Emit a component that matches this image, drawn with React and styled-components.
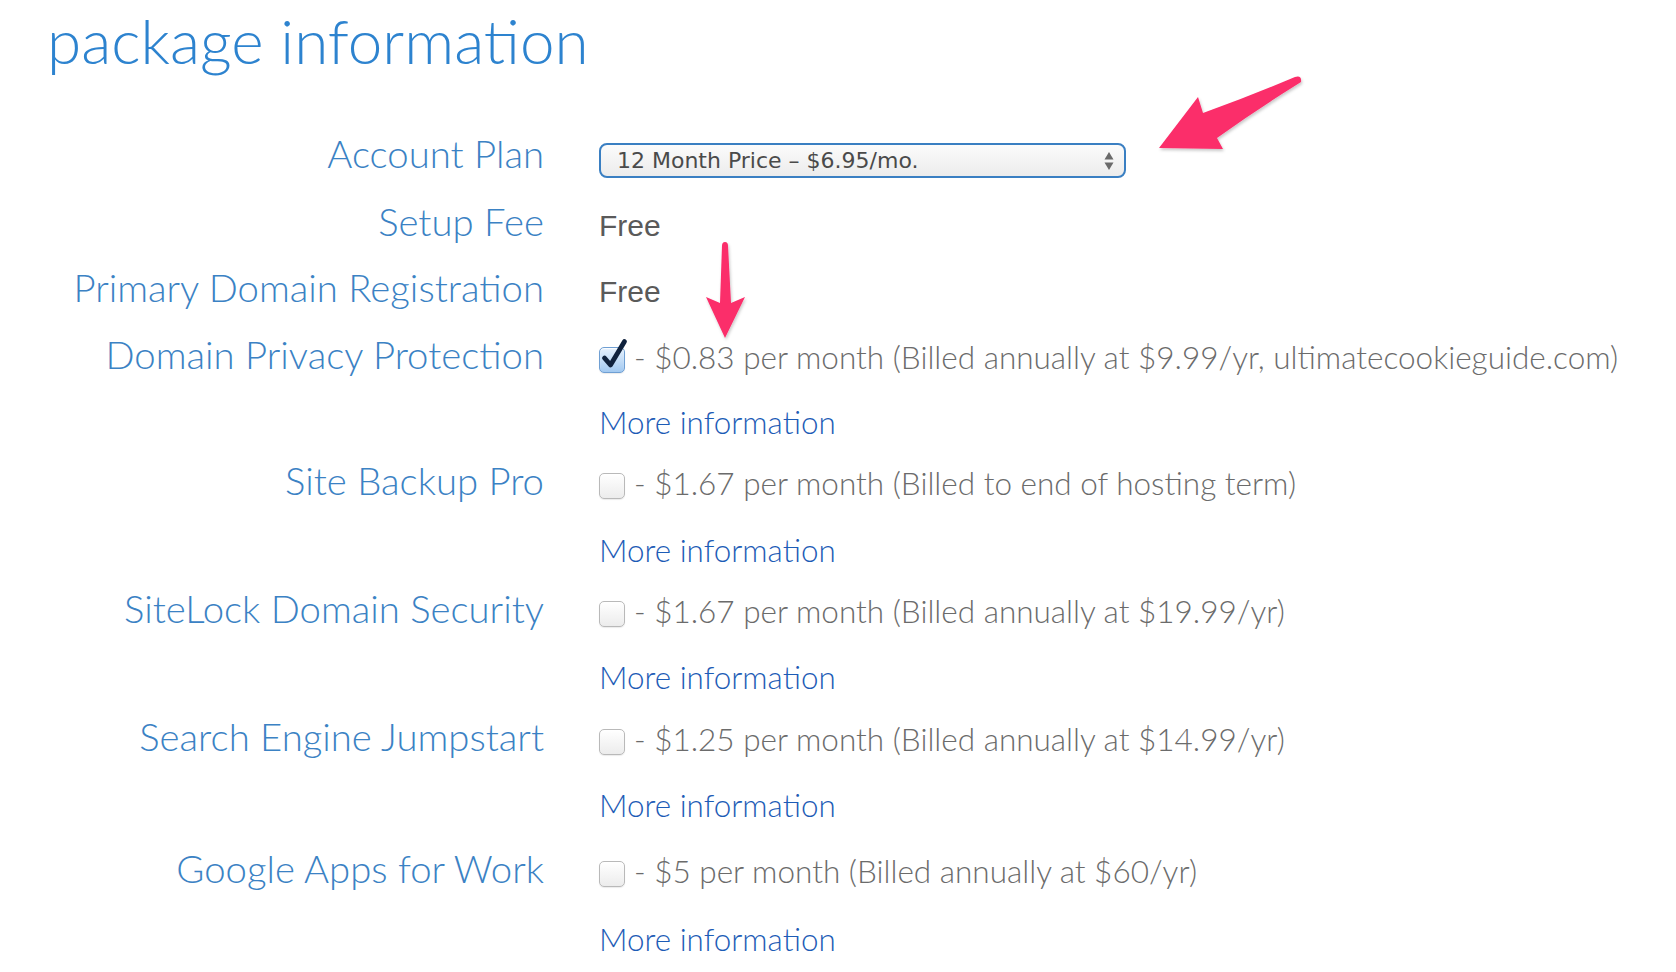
import React from 'react';
import styled, { createGlobalStyle } from 'styled-components';

const GlobalStyle = createGlobalStyle`
  html, body { margin: 0; padding: 0; background: #fff; }
  body { font-family: Lato, "Open Sans", sans-serif; }
`;

const Page = styled.div`
  position: relative;
  width: 1676px;
  height: 972px;
  overflow: hidden;
  background: #fff;
`;

const Title = styled.h1`
  margin: 0 0 53px 47px;
  font-family: Lato, sans-serif;
  font-weight: 300;
  font-size: 62px;
  line-height: 80px;
  color: #2d83cf;
  white-space: nowrap;
`;

const Form = styled.div`
  display: flex;
  flex-direction: column;
`;

const Row = styled.div`
  display: grid;
  grid-template-columns: 544px 1fr;
  column-gap: 55px;
  align-items: baseline;
  height: ${p => p.$h}px;
`;

const Label = styled.div`
  text-align: right;
  font-family: Lato, sans-serif;
  font-weight: 300;
  font-size: 38.3px;
  line-height: 40px;
  color: #3b82c4;
  white-space: nowrap;
`;

const Value = styled.div`
  font-family: Lato, sans-serif;
  font-weight: 300;
  font-size: 31.5px;
  line-height: 45px;
  color: #6b6b6b;
  white-space: nowrap;
`;

const Free = styled.div`
  font-family: "Liberation Sans", Arial, sans-serif;
  font-size: 30px;
  line-height: 45px;
  color: #5a5a5a;
`;

const InfoLink = styled.a`
  grid-column: 2;
  font-family: Lato, sans-serif;
  font-weight: 300;
  font-size: 31.4px;
  line-height: 45px;
  color: #1d5cb6;
  text-decoration: none;
  white-space: nowrap;
`;

const Select = styled.div`
  box-sizing: border-box;
  width: 527px;
  height: 35px;
  border: 2px solid #3a7fc2;
  border-radius: 8px;
  background: linear-gradient(#fbfbfb, #ececec);
  display: flex;
  align-items: center;
  justify-content: space-between;
  padding: 0 10px 0 16px;
  font-family: "DejaVu Sans", sans-serif;
  font-size: 22px;
  color: #4a4a4a;
`;

const Box = styled.span`
  position: relative;
  display: inline-block;
  box-sizing: border-box;
  width: 26px;
  height: 26px;
  margin-right: 9px;
  vertical-align: -4px;
  border-radius: 5px;
  border: 1px solid ${p => (p.$checked ? '#6f9fd3' : '#b9b9b9')};
  background: ${p =>
    p.$checked
      ? 'linear-gradient(#e6f1fd, #a2c9f1)'
      : 'linear-gradient(#ffffff, #ececec)'};
  box-shadow: inset 0 1px 1px rgba(255,255,255,0.9), 0 1px 1px rgba(0,0,0,0.08);
`;

const Tick = styled.svg`
  position: absolute;
  left: 2px;
  top: -9px;
  overflow: visible;
`;

const Overlay = styled.svg`
  position: absolute;
  left: 0;
  top: 0;
  pointer-events: none;
`;

const Check = ({ checked }) => (
  <Box $checked={checked}>
    {checked && (
      <Tick width="26" height="30" viewBox="0 0 26 30">
        <path d="M2.5 19 L8.5 26 L22.5 2.5" fill="none" stroke="#10223d" strokeWidth="4.8" strokeLinecap="round" strokeLinejoin="round" />
      </Tick>
    )}
  </Box>
);

const Updown = () => (
  <svg width="10" height="20" viewBox="0 0 10 20">
    <path d="M5 1 L9.5 8.5 L0.5 8.5 Z" fill="#6a6a6a" />
    <path d="M5 19 L9.5 11.5 L0.5 11.5 Z" fill="#6a6a6a" />
  </svg>
);

const addons = [
  { label: 'Domain Privacy Protection', checked: true, text: '- $0.83 per month (Billed annually at $9.99/yr, ultimatecookieguide.com)', h: 66, ih: 60 },
  { label: 'Site Backup Pro', text: '- $1.67 per month (Billed to end of hosting term)', h: 68, ih: 60 },
  { label: 'SiteLock Domain Security', text: '- $1.67 per month (Billed annually at $19.99/yr)', h: 67, ih: 61 },
  { label: 'Search Engine Jumpstart', text: '- $1.25 per month (Billed annually at $14.99/yr)', h: 67, ih: 65 },
  { label: 'Google Apps for Work', text: '- $5 per month (Billed annually at $60/yr)', h: 69, ih: 60 },
];

export default function App() {
  return (
    <Page>
      <GlobalStyle />
      <Title>package information</Title>
      <Form>
        <Row $h={68}>
          <Label>Account Plan</Label>
          <Select>
            <span>12 Month Price – $6.95/mo.</span>
            <Updown />
          </Select>
        </Row>
        <Row $h={66}>
          <Label>Setup Fee</Label>
          <Free>Free</Free>
        </Row>
        <Row $h={67}>
          <Label>Primary Domain Registration</Label>
          <Free>Free</Free>
        </Row>
        {addons.map(a => (
          <React.Fragment key={a.label}>
            <Row $h={a.h}>
              <Label>{a.label}</Label>
              <Value>
                <Check checked={a.checked} />
                {a.text}
              </Value>
            </Row>
            <Row $h={a.ih}>
              <InfoLink href="#">More information</InfoLink>
            </Row>
          </React.Fragment>
        ))}
      </Form>
      <Overlay width="1676" height="972" viewBox="0 0 1676 972">
        <defs>
          <filter id="sh" x="-20%" y="-20%" width="140%" height="140%">
            <feDropShadow dx="1" dy="2" stdDeviation="1.5" floodColor="#000" floodOpacity="0.22" />
          </filter>
        </defs>
        <path
          filter="url(#sh)"
          fill="#fb2d6a"
          d="M1159 148 L1198 97 L1203 113 Q1250 96 1295 77 Q1302 75 1301 82 Q1256 110 1217 138 L1223 149 Z"
        />
        <path
          filter="url(#sh)"
          fill="#fb2d6a"
          d="M725 242 Q728 242 728 246 L731 303 L745 297 L725 338 L706 297 L720 303 L722 246 Q722 242 725 242 Z"
        />
      </Overlay>
    </Page>
  );
}
